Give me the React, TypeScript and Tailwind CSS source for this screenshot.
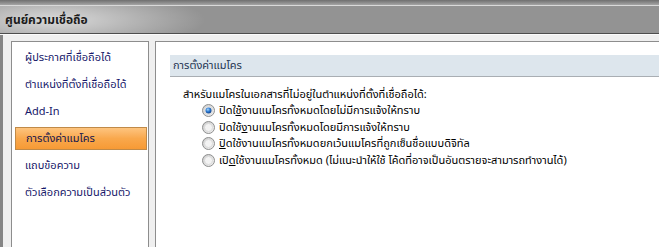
import React from 'react'

const navItems = [
  'ผู้ประกาศที่เชื่อถือได้',
  'ตำแหน่งที่ตั้งที่เชื่อถือได้',
  'Add-In',
  'การตั้งค่าแมโคร',
  'แถบข้อความ',
  'ตัวเลือกความเป็นส่วนตัว',
]

const Radio = ({ checked }: { checked?: boolean }) => (
  <svg width="13" height="13" viewBox="0 0 13 13" className="shrink-0">
    <defs>
      <linearGradient id="ring" x1="0" y1="0" x2="1" y2="1">
        <stop offset="0" stopColor="#c9c9c9" />
        <stop offset="1" stopColor="#f4f4f4" />
      </linearGradient>
      <radialGradient id="dot" cx="0.4" cy="0.35" r="0.7">
        <stop offset="0" stopColor="#a6d8ff" />
        <stop offset="0.5" stopColor="#2a78d0" />
        <stop offset="1" stopColor="#0d3a80" />
      </radialGradient>
    </defs>
    <circle cx="6.5" cy="6.5" r="6" fill="url(#ring)" stroke="#8e8f8f" strokeWidth="1" />
    <circle cx="6.5" cy="6.5" r="4" fill="#f3f3f3" stroke="#d6d6d6" strokeWidth="0.8" />
    {checked && <circle cx="6.5" cy="6.5" r="3" fill="url(#dot)" />}
  </svg>
)

const App = () => {
  return (
    <div
      className="w-[659px] h-[247px] overflow-hidden flex flex-col bg-[#efefef] text-[11px] leading-none"
      style={{ fontFamily: 'Tahoma, "Noto Sans Thai", "Noto Sans", "DejaVu Sans", sans-serif' }}
    >
      {/* window frame top */}
      <div className="h-[5px] bg-gradient-to-b from-[#6f6f6f] to-[#a5a5a5] border-b border-[#d9d9d9] box-content" />
      <div className="h-[27px] flex items-center pl-[5px] bg-[radial-gradient(ellipse_150px_30px_at_55px_14px,#dadada,#939393)]">
        <span className="font-bold text-[12px] text-[#1c1c1c]">ศูนย์ความเชื่อถือ</span>
      </div>
      <div className="h-px bg-[#4d4d4d]" />
      <div className="h-px bg-[#fbfbfb]" />

      <div className="flex-1 flex min-h-0">
        <div className="w-[3px] bg-[#858585]" />
        <div className="flex-1 flex pt-[6px] pl-[8px] min-h-0">
          {/* left nav */}
          <div className="w-[138px] bg-white border border-[#8d8d8d] border-b-0 pt-[2px]">
            {navItems.map((item, i) => (
              <div key={i} className="h-[27px] py-[2px] pl-[3px] pr-px">
                <div
                  className={
                    i === 3
                      ? 'h-[23px] flex items-center pl-[10px] border border-[#c08a48] bg-gradient-to-b from-[#fdc47e] via-[#f9a84c] to-[#f79a34] text-[#16164e]'
                      : 'h-[23px] flex items-center pl-[10px] text-[#17186a]'
                  }
                >
                  {item}
                </div>
              </div>
            ))}
          </div>

          <div className="w-[6px]" />

          {/* right content */}
          <div className="flex-1 bg-white border-t border-l border-[#8d8d8d] pt-[13px] pl-[14px]">
            <div className="h-[22px] bg-[#dde6ed] border-b border-[#a9aeb3] flex items-center pl-[3px] text-[#1f3553]">
              การตั้งค่าแมโคร
            </div>
            <div className="ml-[13px] mt-[9px] text-black">
              <div className="h-[16px] flex items-center">สำหรับแมโครในเอกสารที่ไม่อยู่ในตำแหน่งที่ตั้งที่เชื่อถือได้:</div>
              <div className="ml-[19px] flex flex-col">
                <div className="h-[17px] flex items-center gap-[4px]">
                  <Radio checked />
                  <span>
                    ปิดใ<u>ช้</u>งานแมโครทั้งหมดโดยไม่มีการแจ้งให้ทราบ
                  </span>
                </div>
                <div className="h-[16px] flex items-center gap-[4px]">
                  <Radio />
                  <span>
                    ปิดใช้<u>ง</u>านแมโครทั้งหมดโดยมีการแจ้งให้ทราบ
                  </span>
                </div>
                <div className="h-[17px] flex items-center gap-[4px]">
                  <Radio />
                  <span>
                    <u>ปิ</u>ดใช้งานแมโครทั้งหมดยกเว้นแมโครที่ถูกเซ็นชื่อแบบดิจิทัล
                  </span>
                </div>
                <div className="h-[16px] flex items-center gap-[4px]">
                  <Radio />
                  <span>
                    เปิ<u>ด</u>ใช้งานแมโครทั้งหมด (ไม่แนะนำให้ใช้ โค้ดที่อาจเป็นอันตรายจะสามารถทำงานได้)
                  </span>
                </div>
              </div>
            </div>
          </div>
        </div>
      </div>
    </div>
  )
}

export default App
